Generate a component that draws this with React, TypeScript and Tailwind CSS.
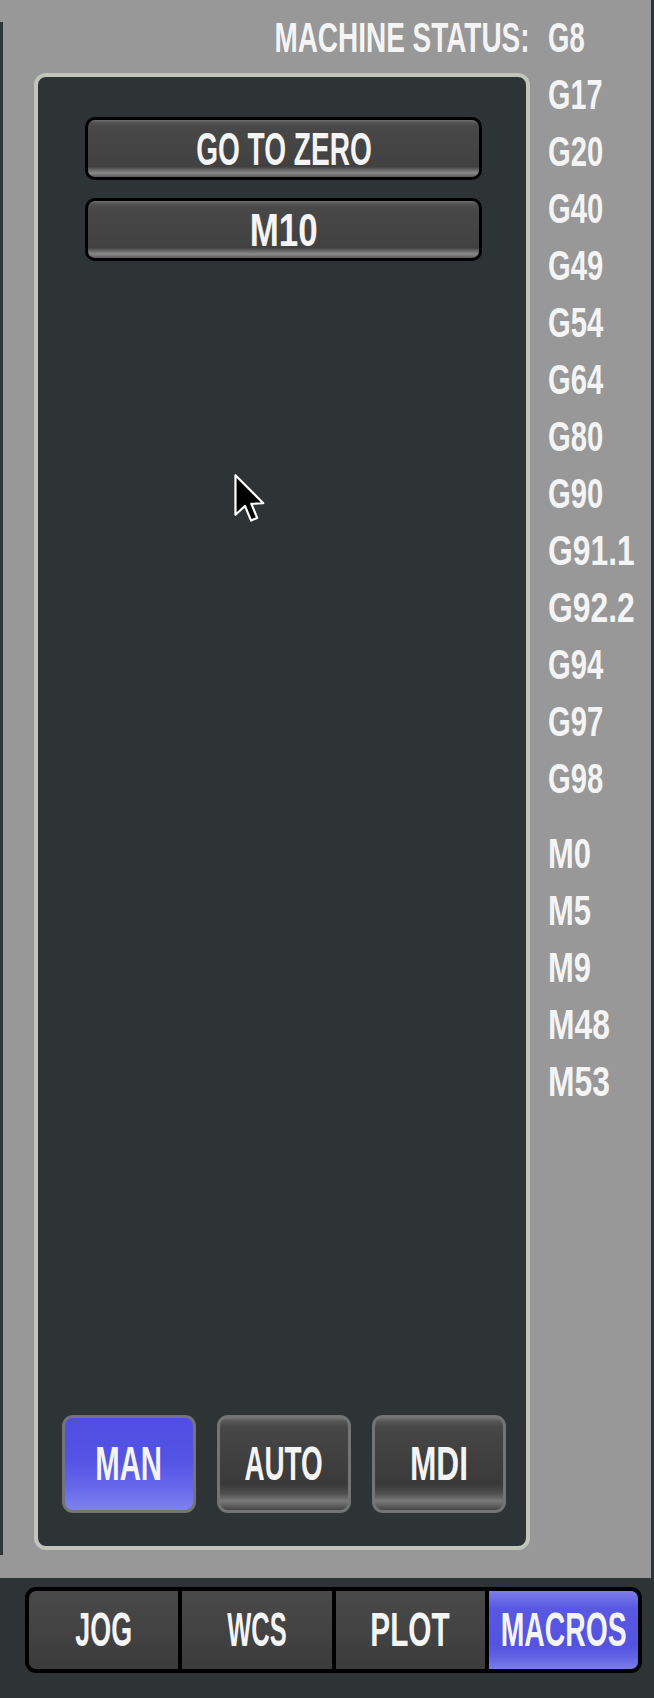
import React from "react";

const FONT = "font-['Liberation_Sans',Arial,sans-serif] font-bold text-[#f4f4f4]";

const codes: { t: string; s: string; extra?: string }[] = [
  { t: "G8", s: "scale-x-[0.64]" },
  { t: "G17", s: "scale-x-[0.67]" },
  { t: "G20", s: "scale-x-[0.68]" },
  { t: "G40", s: "scale-x-[0.68]" },
  { t: "G49", s: "scale-x-[0.68]" },
  { t: "G54", s: "scale-x-[0.68]" },
  { t: "G64", s: "scale-x-[0.68]" },
  { t: "G80", s: "scale-x-[0.68]" },
  { t: "G90", s: "scale-x-[0.68]" },
  { t: "G91.1", s: "scale-x-[0.74]" },
  { t: "G92.2", s: "scale-x-[0.74]" },
  { t: "G94", s: "scale-x-[0.68]" },
  { t: "G97", s: "scale-x-[0.68]" },
  { t: "G98", s: "scale-x-[0.68]" },
  { t: "M0", s: "scale-x-[0.72]", extra: "mt-[18px]" },
  { t: "M5", s: "scale-x-[0.72]" },
  { t: "M9", s: "scale-x-[0.72]" },
  { t: "M48", s: "scale-x-[0.74]" },
  { t: "M53", s: "scale-x-[0.74]" },
];

function Cursor() {
  return (
    <svg
      className="absolute left-[234px] top-[474px]"
      width="31"
      height="50"
      viewBox="-0.5 -0.5 12.5 20.5"
    >
      <path
        d="M0 0 L0 16.2 L3.9 12.6 L6.4 18.6 L8.9 17.5 L6.5 11.7 L11.4 11.5 Z"
        fill="#000"
        stroke="#fff"
        strokeWidth="0.9"
        strokeLinejoin="round"
      />
    </svg>
  );
}

function GrayButton({ label, scale }: { label: string; scale: string }) {
  return (
    <div className="h-[63px] rounded-[10px] bg-black p-[3px]">
      <div className="flex h-full items-center justify-center rounded-[7px] bg-[linear-gradient(to_bottom,#707070_0%,#525252_5%,#484848_12%,#444444_50%,#414141_82%,#6a6a6a_88%,#8a8a8a_93%,#5a5a5a_100%)]">
        <span className={`inline-block text-[46px] leading-none ${FONT} ${scale}`}>{label}</span>
      </div>
    </div>
  );
}

function ModeButton({ label, scale, active }: { label: string; scale: string; active?: boolean }) {
  return (
    <div className="h-[98px] w-[134px] shrink-0 rounded-[11px] bg-[#747474] p-[3px]">
      <div
        className={
          active
            ? "flex h-full items-center justify-center rounded-[8px] bg-[linear-gradient(to_bottom,#4e4ee2_0%,#5353e4_45%,#6668ea_75%,#7e82f0_100%)]"
            : "flex h-full items-center justify-center rounded-[8px] bg-[linear-gradient(to_bottom,#6e6e6e_0%,#555555_4%,#474747_10%,#3f3f3f_45%,#3a3a3a_72%,#4e4e4e_82%,#7a7a7a_90%,#5c5c5c_96%,#454545_100%)]"
        }
      >
        <span className={`inline-block text-[48px] leading-none ${FONT} ${scale}`}>{label}</span>
      </div>
    </div>
  );
}

function Tab({ label, scale, active, cls }: { label: string; scale: string; active?: boolean; cls: string }) {
  return (
    <div
      className={`flex h-full items-center justify-center ${cls} ${
        active
          ? "bg-[linear-gradient(to_bottom,#7c7ee9_0%,#5858e2_22%,#5353e0_70%,#6264e4_85%,#7c7ee9_100%)]"
          : "bg-[linear-gradient(to_bottom,#494949_0%,#434343_50%,#3b3b3b_100%)]"
      }`}
    >
      <span className={`inline-block text-[48px] leading-none ${FONT} ${scale}`}>{label}</span>
    </div>
  );
}

export default function App() {
  return (
    <div className="relative flex h-[1698px] w-[654px] flex-col overflow-hidden bg-[#2e3336]">
      {/* top gray section */}
      <div className="flex h-[1578px] w-[651px] shrink-0 bg-[#979897]">
        <div className="mt-[22px] h-[1533px] w-[3px] shrink-0 bg-[#2e3336]" />
        <div className="ml-[31px] flex w-[496px] shrink-0 flex-col">
          <div className="h-[73px] whitespace-nowrap pt-[9px] text-right leading-[57px]">
            <span className={`inline-block origin-right scale-x-[0.65] text-[43px] ${FONT}`}>
              MACHINE STATUS:
            </span>
          </div>
          <div className="flex h-[1477px] flex-col rounded-[12px] border-[4px] border-[#c3c5bd] bg-[#2e3336]">
            <div className="flex flex-col gap-[18px] pl-[47px] pr-[44px] pt-[40px]">
              <GrayButton label="GO TO ZERO" scale="scale-x-[0.61]" />
              <GrayButton label="M10" scale="scale-x-[0.76]" />
            </div>
            <div className="mt-auto flex gap-[21px] pb-[33px] pl-[24px]">
              <ModeButton label="MAN" scale="scale-x-[0.61]" active />
              <ModeButton label="AUTO" scale="scale-x-[0.58]" />
              <ModeButton label="MDI" scale="scale-x-[0.66]" />
            </div>
          </div>
        </div>
        <div className="ml-[18px] flex min-w-0 flex-1 flex-col whitespace-nowrap pt-[9px]">
          {codes.map((c) => (
            <div key={c.t} className={`h-[57px] leading-[57px] ${c.extra ?? ""}`}>
              <span className={`inline-block origin-left text-[43px] ${FONT} ${c.s}`}>{c.t}</span>
            </div>
          ))}
        </div>
      </div>

      {/* bottom tab bar */}
      <div className="pl-[25px] pt-[9px]">
        <div className="grid h-[86px] w-[617px] grid-cols-4 gap-[4px] rounded-[11px] bg-black p-[4px]">
          <Tab label="JOG" scale="scale-x-[0.56]" cls="rounded-l-[7px]" />
          <Tab label="WCS" scale="scale-x-[0.53]" cls="" />
          <Tab label="PLOT" scale="scale-x-[0.62]" cls="" />
          <Tab label="MACROS" scale="scale-x-[0.59]" cls="rounded-r-[7px]" active />
        </div>
      </div>

      <Cursor />
    </div>
  );
}
